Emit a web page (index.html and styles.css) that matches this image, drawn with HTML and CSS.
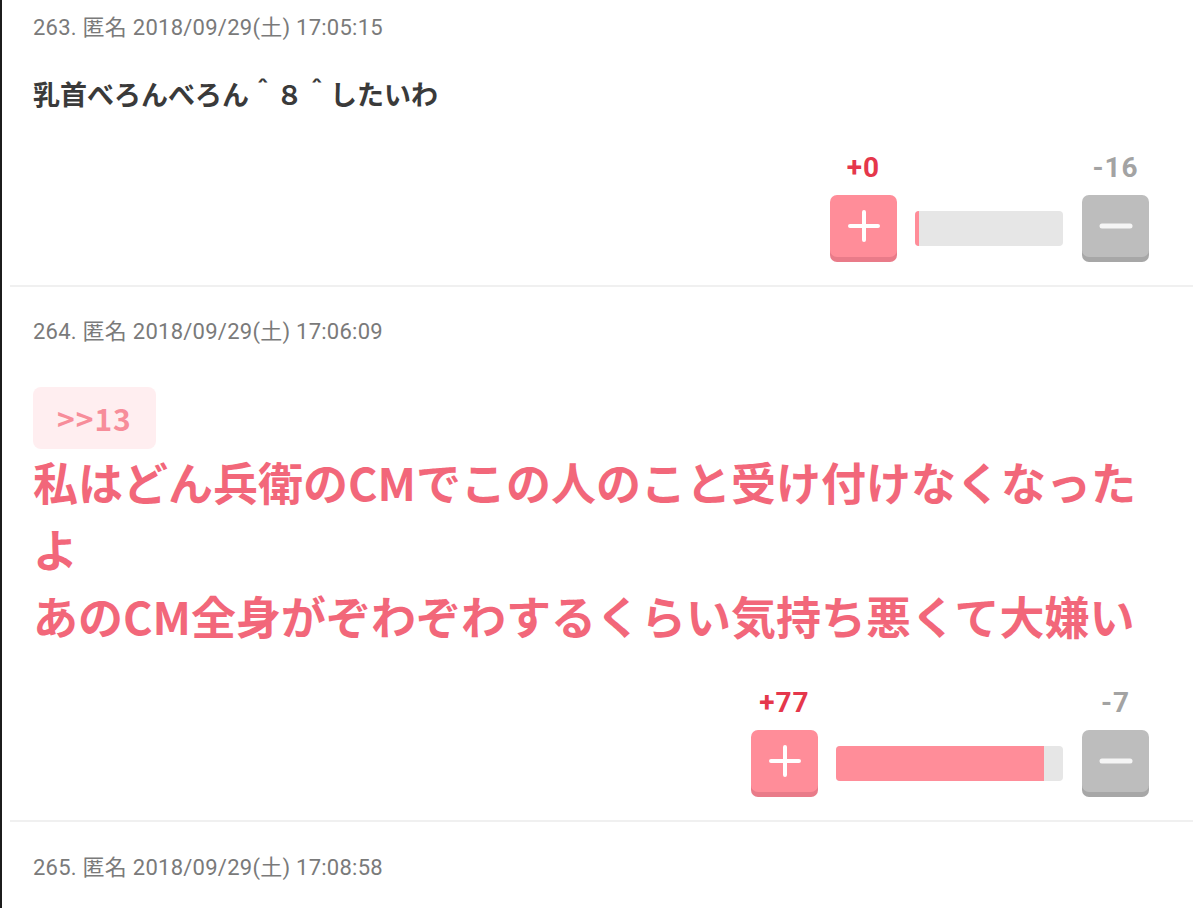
FILE: index.html
```html
<!DOCTYPE html>
<html lang="ja">
<head>
<meta charset="utf-8">
<title>コメント</title>
<link rel="stylesheet" href="styles.css">
</head>
<body>
<div class="page">
  <ul class="comments">
    <li class="post">
      <div class="meta">263. 匿名 2018/09/29(土) 17:05:15</div>
      <div class="body body-normal">乳首べろんべろん＾８＾したいわ</div>
      <div class="votes">
        <div class="vcol">
          <span class="vnum vnum-plus">+0</span>
          <button class="vbtn vbtn-plus" type="button" aria-label="プラス">
            <svg width="32" height="32" viewBox="0 0 32 32"><path d="M16 2v28M2 16h28" stroke="#fff" stroke-width="4" stroke-linecap="round" fill="none"/></svg>
          </button>
        </div>
        <div class="bar" style="width:148px"><div class="fill fill-min"></div></div>
        <div class="vcol">
          <span class="vnum vnum-minus">-16</span>
          <button class="vbtn vbtn-minus" type="button" aria-label="マイナス">
            <svg width="34" height="32" viewBox="0 0 34 32"><path d="M3 16h28" stroke="#f5f5f5" stroke-width="5" stroke-linecap="round" fill="none"/></svg>
          </button>
        </div>
      </div>
    </li>
    <li class="post">
      <div class="meta">264. 匿名 2018/09/29(土) 17:06:09</div>
      <div class="anchor">&gt;&gt;13</div>
      <div class="body body-big">私はどん兵衛のCMでこの人のこと受け付けなくなったよ<br>あのCM全身がぞわぞわするくらい気持ち悪くて大嫌い</div>
      <div class="votes votes-big">
        <div class="vcol">
          <span class="vnum vnum-plus">+77</span>
          <button class="vbtn vbtn-plus" type="button" aria-label="プラス">
            <svg width="32" height="32" viewBox="0 0 32 32"><path d="M16 2v28M2 16h28" stroke="#fff" stroke-width="4" stroke-linecap="round" fill="none"/></svg>
          </button>
        </div>
        <div class="bar" style="width:227px"><div class="fill" style="width:91.7%"></div></div>
        <div class="vcol">
          <span class="vnum vnum-minus">-7</span>
          <button class="vbtn vbtn-minus" type="button" aria-label="マイナス">
            <svg width="34" height="32" viewBox="0 0 34 32"><path d="M3 16h28" stroke="#f5f5f5" stroke-width="5" stroke-linecap="round" fill="none"/></svg>
          </button>
        </div>
      </div>
    </li>
    <li class="post post-last">
      <div class="meta">265. 匿名 2018/09/29(土) 17:08:58</div>
    </li>
  </ul>
</div>
</body>
</html>
```
FILE: styles.css
```css
html, body {
  margin: 0;
  padding: 0;
  background: #ffffff;
}
body {
  width: 1200px;
  height: 908px;
  overflow: hidden;
  font-family: Roboto, "Noto Sans CJK JP", sans-serif;
}
.page {
  box-sizing: border-box;
  height: 908px;
  border-left: 2px solid #1c1c1c;
  overflow: hidden;
}
.comments {
  list-style: none;
  margin: -17px 7px 0 8px;
  padding: 0;
}
.post {
  padding: 31px 44px 23px 23px;
  border-bottom: 2px solid #f0f0f0;
}
.post-last {
  padding-top: 32px;
  border-bottom: none;
}
.meta {
  font-size: 22px;
  line-height: 28px;
  letter-spacing: 0.25px;
  color: #7a7a7a;
}
.body {
  font-family: "Noto Sans CJK JP", sans-serif;
  font-weight: 700;
}
.body-normal {
  margin-top: 32px;
  font-size: 27px;
  line-height: 40px;
  color: #3a3a3a;
}
.anchor {
  display: inline-block;
  margin-top: 41px;
  padding: 0 24px;
  height: 62px;
  line-height: 62px;
  border-radius: 8px;
  background: #ffeef0;
  color: #f78d9a;
  font-family: "Noto Sans CJK JP", sans-serif;
  font-size: 30px;
  letter-spacing: 1px;
  font-weight: 700;
}
.body-big {
  margin-top: -1px;
  font-size: 45px;
  line-height: 67px;
  color: #f2677a;
}
.votes {
  display: flex;
  justify-content: flex-end;
  align-items: flex-end;
  margin-top: 41px;
}
.votes-big {
  margin-top: 41px;
}
.vcol {
  display: flex;
  flex-direction: column;
  align-items: center;
  width: 67px;
}
.vnum {
  font-size: 28px;
  line-height: 26px;
  letter-spacing: 1px;
  font-weight: 700;
  margin-bottom: 14px;
}
.vnum-plus {
  color: #e5374b;
}
.vnum-minus {
  color: #a3a3a3;
}
.vbtn {
  display: flex;
  align-items: center;
  justify-content: center;
  width: 67px;
  height: 62px;
  margin-bottom: 5px;
  padding: 0;
  border: none;
  border-radius: 7px;
  cursor: pointer;
}
.vbtn-plus {
  background: #ff8d99;
  box-shadow: 0 5px 0 #e97b89;
}
.vbtn-minus {
  background: #bdbdbd;
  box-shadow: 0 5px 0 #a7a7a7;
}
.bar {
  height: 35px;
  margin: 0 19px 16px 18px;
  background: #e6e6e6;
  border-radius: 4px;
  overflow: hidden;
}
.fill {
  height: 100%;
  background: #ff8d99;
}
.fill-min {
  width: 4px;
}
```
